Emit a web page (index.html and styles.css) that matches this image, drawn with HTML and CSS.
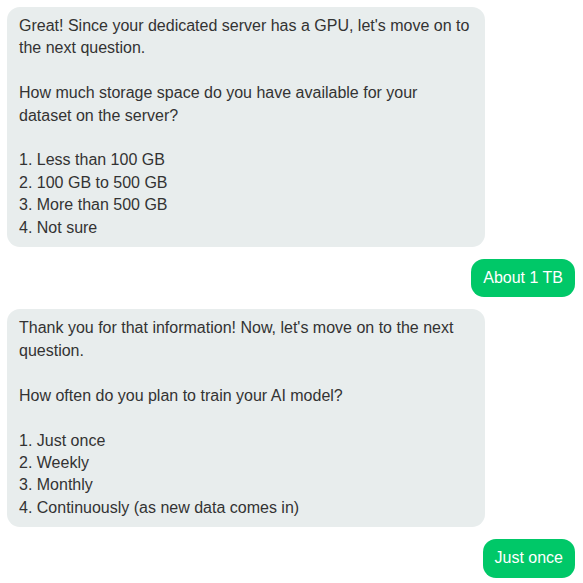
FILE: index.html
```html
<!DOCTYPE html>
<html>
<head>
<meta charset="utf-8">
<link rel="stylesheet" href="styles.css">
</head>
<body>
<div class="chat">
  <div class="msg bot">Great! Since your dedicated server has a GPU, let's move on to the next question.

How much storage space do you have available for your dataset on the server?

1. Less than 100 GB
2. 100 GB to 500 GB
3. More than 500 GB
4. Not sure</div>
  <div class="msg user">About 1 TB</div>
  <div class="msg bot">Thank you for that information! Now, let's move on to the next question.

How often do you plan to train your AI model?

1. Just once
2. Weekly
3. Monthly
4. Continuously (as new data comes in)</div>
  <div class="msg user">Just once</div>
</div>
</body>
</html>
```
FILE: styles.css
```css
html, body {
  margin: 0;
  padding: 0;
  background: #ffffff;
}
body {
  font-family: "Liberation Sans", Arial, sans-serif;
  font-size: 16px;
  color: #333333;
}
.chat {
  display: flex;
  flex-direction: column;
  gap: 12px;
  padding: 7px 8px 0 7px;
}
.msg {
  white-space: pre-line;
  line-height: 22.4px;
  padding: 8px 12px;
  border-radius: 13px;
  box-sizing: border-box;
}
.bot {
  align-self: flex-start;
  width: 478px;
  background: #e8eded;
  color: #333333;
}
.user {
  align-self: flex-end;
  background: #00c868;
  color: #ffffff;
  padding: 8px 12px;
}
```
